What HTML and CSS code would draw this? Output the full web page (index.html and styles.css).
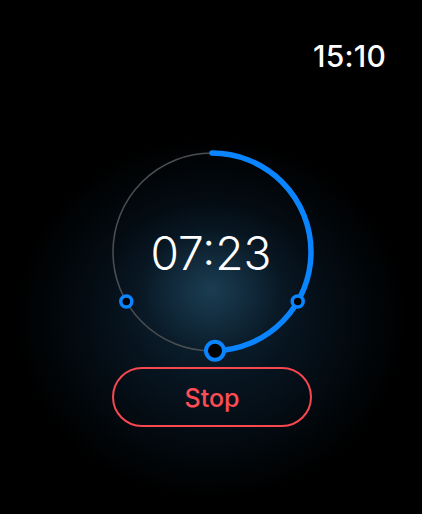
FILE: index.html
```html
<!DOCTYPE html>
<html lang="en">
<head>
<meta charset="utf-8">
<title>Timer</title>
<link rel="stylesheet" href="styles.css">
</head>
<body>
<div class="screen">
  <header class="status">
    <span class="clock">15:10</span>
  </header>
  <div class="dial">
    <svg class="ring" width="220" height="220" viewBox="0 0 220 220" aria-hidden="true">
      <circle cx="110" cy="110" r="99" fill="none" stroke="#4a4d52" stroke-width="1.6"/>
      <circle cx="110" cy="110" r="99" fill="none" stroke="#0a84ff" stroke-width="5.5"
              stroke-linecap="round" stroke-dasharray="308 700"
              transform="rotate(-90 110 110)"/>
      <circle cx="24.3" cy="159.5" r="5.5" fill="#000" stroke="#0a84ff" stroke-width="3.5"/>
      <circle cx="195.7" cy="159.5" r="5.5" fill="#000" stroke="#0a84ff" stroke-width="3.5"/>
      <circle cx="113" cy="208.8" r="9" fill="#000" stroke="#0a84ff" stroke-width="4"/>
    </svg>
    <div class="remaining">07:23</div>
  </div>
  <button class="stop" type="button">Stop</button>
</div>
</body>
</html>
```

FILE: styles.css
```css
html, body {
  margin: 0;
  padding: 0;
  background: #000;
}

.screen {
  width: 422px;
  height: 514px;
  display: flex;
  flex-direction: column;
  align-items: center;
  font-family: Inter, "Noto Sans", sans-serif;
  background:
    radial-gradient(ellipse 100px 88px at 211px 290px,
      rgba(28, 62, 84, 0.95) 0%,
      rgba(22, 52, 72, 0.6) 40%,
      rgba(14, 36, 52, 0.25) 70%,
      rgba(0, 0, 0, 0) 100%),
    radial-gradient(ellipse 195px 180px at 211px 318px,
      #0b1e2c 0%,
      #081723 30%,
      #050f18 55%,
      #02070b 78%,
      #000 100%);
  overflow: hidden;
}

.status {
  align-self: stretch;
  box-sizing: border-box;
  height: 142px;
  padding: 38px 36px 0 0;
  display: flex;
  justify-content: flex-end;
  align-items: flex-start;
}

.clock {
  color: #fff;
  font-size: 30px;
  line-height: 36px;
  font-weight: 500;
  letter-spacing: 0.2px;
}

.dial {
  display: grid;
  width: 220px;
  height: 220px;
  margin-left: 2px;
}

.ring,
.remaining {
  grid-area: 1 / 1;
}

.ring {
  display: block;
}

.remaining {
  align-self: center;
  justify-self: center;
  padding-top: 2px;
  color: #fff;
  font-size: 46px;
  font-weight: 300;
  margin-right: 2px;
}

.stop {
  box-sizing: border-box;
  width: 200px;
  height: 60px;
  margin-top: 5px;
  margin-left: 2px;
  padding: 2px 0 0;
  border: 2.5px solid #f7474f;
  border-radius: 30px;
  background: transparent;
  color: #ff4d55;
  font-family: Inter, "Noto Sans", sans-serif;
  font-size: 25px;
  font-weight: 500;
}
```
